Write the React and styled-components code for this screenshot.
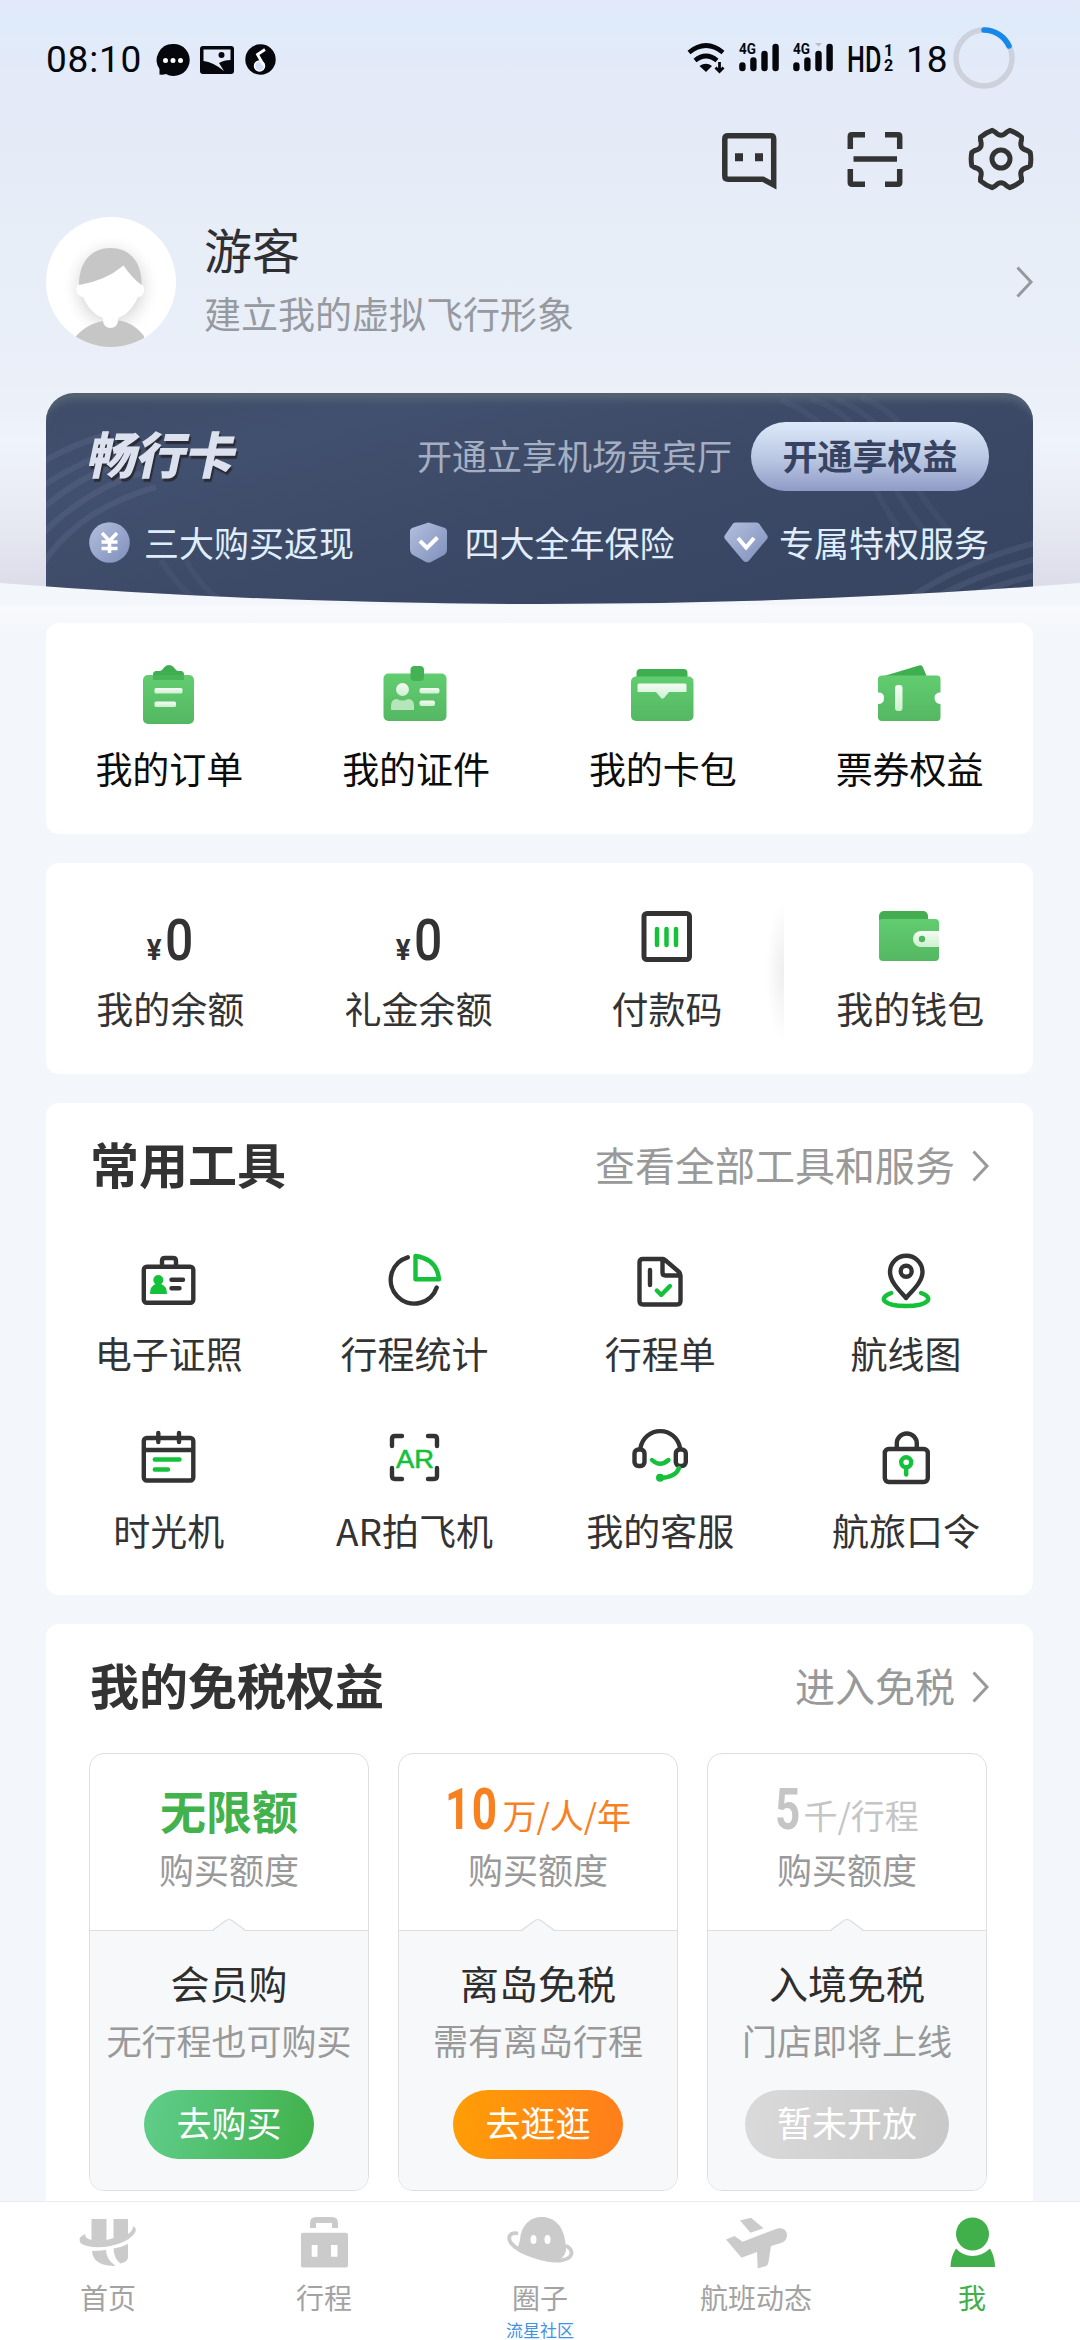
import React from "react";
import styled, { createGlobalStyle } from "styled-components";

const GlobalStyle = createGlobalStyle`
  * {
    box-sizing: border-box;
  }

  body {
    margin: 0;
    background: #f3f6fa;
    font-family: "Noto Sans CJK SC", "Liberation Sans", sans-serif;
    color: #333;
  }

  svg {
    display: block;
    overflow: visible;
    flex-shrink: 0;
  }
`;

const Page = styled.div`
  display: flex;
  flex-direction: column;
  width: 1080px;
  height: 2340px;
  overflow: hidden;
  background: #f3f6fa;
`;

const Hero = styled.header`
  height: 605px;
  flex-shrink: 0;
  background: linear-gradient(
    180deg,
    #e4e9fa 0,
    #dfebfa 22px,
    #e4eaf8 80px,
    #e4ebf7 140px,
    #e7eef8 240px,
    #eaeff8 380px,
    #eff3fb 440px,
    #e9ebf4 510px,
    #dbdce8 590px
  );
  clip-path: path("M0 0H1080V583Q540 625 0 583Z");
`;

/* status bar */

const StatusBar = styled.div`
  display: flex;
  align-items: center;
  height: 116px;
  padding: 0 65px 0 46px;
  font-family: Roboto, "Liberation Sans", sans-serif;
  font-size: 37px;
  line-height: 40px;
  color: #05070c;
`;

const Clock = styled.span`
  width: 111px;
  padding-top: 4px;
  letter-spacing: 0.8px;
`;

const StatusIcons = styled.div`
  display: flex;
  align-items: center;
  gap: 11px;
  margin-top: 3px;
`;

const StatusRight = styled.div`
  display: flex;
  align-items: center;
  margin-left: auto;
`;

const Signal = styled.svg`
  margin-left: 14px;
`;

const Hd = styled.span`
  display: inline-block;
  width: 36px;
  margin-left: 14px;
  padding-top: 3px;
  font-size: 36px;
  font-weight: 500;
  transform: scaleX(0.7);
  transform-origin: left;
`;

const HdLines = styled.span`
  display: flex;
  flex-direction: column;
  width: 23px;
  padding-left: 1px;
  font-size: 16px;
  font-weight: 700;
  line-height: 15px;
`;

const Battery = styled.span`
  width: 47px;
  padding-top: 4px;
`;

/* toolbar + profile */

const Toolbar = styled.div`
  display: flex;
  justify-content: flex-end;
  align-items: center;
  gap: 62px;
  height: 88px;
  padding-right: 47px;
`;

const Profile = styled.div`
  display: flex;
  align-items: center;
  height: 130px;
  margin-top: 13px;
  padding: 0 47px 0 46px;
`;

const ProfileText = styled.div`
  flex: 1;
  padding-left: 28px;
`;

const Name = styled.div`
  font-size: 48px;
  line-height: 62px;
  color: #2e2f33;
`;

const Motto = styled.div`
  font-size: 37px;
  line-height: 68px;
  color: #96999f;
`;

/* membership card */

const VipCard = styled.section`
  position: relative;
  width: 987px;
  height: 220px;
  margin: 46px 0 0 46px;
  padding: 27px 44px 0 43px;
  border-top: 2px solid #55606f;
  border-radius: 28px 28px 0 0;
  overflow: hidden;
  background: linear-gradient(165deg, #3e4c69 0%, #42506f 22%, #3c4a67 50%, #384663 80%, #374560 100%);
  box-shadow: inset 0 10px 8px -6px #596777;
`;

const Waves = styled.svg`
  position: absolute;
  left: 0;
  top: 0;
`;

const VipTop = styled.div`
  position: relative;
  display: flex;
  align-items: center;
  height: 69px;
`;

const VipTitle = styled.h2`
  flex: 1;
  margin: 0;
  padding-bottom: 9px;
  font-size: 50px;
  font-weight: 900;
  line-height: 60px;
  letter-spacing: -1px;
  color: #dbe1ee;
  text-shadow: 2px 3px 1px #2a2b33;
  transform: skewX(-12deg);
`;

const VipHint = styled.span`
  padding-bottom: 4px;
  font-size: 35px;
  color: #a4afc3;
`;

const VipButton = styled.button`
  width: 238px;
  height: 69px;
  margin-left: 19px;
  padding: 0 0 4px;
  border: 0;
  border-radius: 35px;
  background: linear-gradient(180deg, #dde9fa, #b8c6e2 55%, #8f9ac6);
  font: 700 35px/60px "Noto Sans CJK SC", sans-serif;
  color: #374360;
`;

const Perks = styled.div`
  position: relative;
  display: flex;
  justify-content: space-between;
  align-items: center;
  height: 44px;
  margin-top: 29px;
`;

const Perk = styled.div`
  display: flex;
  align-items: center;
  gap: ${props => props.gap}px;
  font-size: 35px;
  line-height: 44px;
  color: #dfedfc;

  &:nth-child(2) {
    margin-left: 7px;
  }
`;

/* white panels */

const Content = styled.main`
  flex: 1;
  min-height: 0;
  display: flex;
  flex-direction: column;
  gap: 29px;
  padding: 18px 47px 0 46px;
  overflow: hidden;
  background: linear-gradient(180deg, #f8fafd, #f3f6fa 30px);
`;

const Panel = styled.section`
  flex-shrink: 0;
  height: ${props => props.height}px;
  border-radius: 13px;
  background: #fff;
`;

const Grid = styled.div`
  display: grid;
  grid-template-columns: ${props => props.columns};
  row-gap: 73px;
  padding-top: ${props => props.top}px;
`;

const Item = styled.div`
  position: relative;
  display: flex;
  flex-direction: column;
  align-items: center;
  height: 104px;
`;

const ItemIcon = styled.div`
  display: flex;
  justify-content: center;
  height: 64px;
`;

const Label = styled.span`
  margin-top: 21px;
  font-size: 37px;
  line-height: 40px;
  white-space: nowrap;
  color: ${props => props.color || "#333"};
`;

const Money = styled.div`
  display: flex;
  align-items: baseline;
  padding-top: 2px;
  font-family: Roboto, "Liberation Sans", sans-serif;
  font-weight: 500;
`;

const Yen = styled.span`
  width: 19px;
  font-size: 30px;
  font-weight: 700;
  transform: scaleX(0.92);
`;

const Amount = styled.span`
  width: 29px;
  font-size: 58px;
  line-height: 70px;
  transform: scaleX(0.86);
  transform-origin: left;
`;

const Divider = styled.i`
  position: absolute;
  left: -25px;
  top: -1px;
  width: 18px;
  height: 140px;
  background: radial-gradient(ellipse 18px 70px at 100% 50%, #eeeeee, rgba(255, 255, 255, 0));
`;

const PanelHead = styled.div`
  display: flex;
  align-items: center;
  justify-content: space-between;
  height: 126px;
  padding: 0 44px;
`;

const PanelTitle = styled.h3`
  margin: 0;
  padding-bottom: 6px;
  font-size: 49px;
  font-weight: 700;
  line-height: 60px;
`;

const More = styled.a`
  display: flex;
  align-items: center;
  gap: 17px;
  padding-bottom: 5px;
  font-size: 40px;
  line-height: 60px;
  color: #999;

  svg {
    margin-top: 5px;
  }
`;

/* duty free offers */

const Offers = styled.div`
  display: flex;
  gap: 29px;
  padding: 3px 0 0 43px;
`;

const Offer = styled.article`
  width: 280px;
  height: 438px;
  border: 1.5px solid #dedede;
  border-radius: 15px;
  overflow: hidden;
  text-align: center;
`;

const Quota = styled.div`
  height: 176px;
  padding-top: 25px;
`;

const QuotaValue = styled.div`
  display: flex;
  justify-content: center;
  align-items: baseline;
  height: 60px;
  font-size: ${props => (props.small ? 34 : 46)}px;
  font-weight: ${props => (props.small ? 400 : 700)};
  line-height: 60px;
  color: ${props => props.color};
`;

const QuotaNumber = styled.b`
  font-family: Roboto, "Liberation Sans", sans-serif;
  font-size: 58px;
  font-weight: 700;
  letter-spacing: 2px;
  margin-right: ${props => props.pull}px;
  transform: scaleX(0.76);
  transform-origin: left;
`;

const Small = styled.div`
  font-size: 35px;
  line-height: 60px;
  white-space: nowrap;
  color: #999;
`;

const OfferBody = styled.div`
  position: relative;
  height: 260px;
  padding-top: 21px;
  border-top: 1.5px solid #dedede;
  background: #f6f8fa;
`;

const Notch = styled.svg`
  position: absolute;
  left: 123px;
  top: -13px;
`;

const OfferName = styled.div`
  margin-bottom: -2px;
  font-size: 39px;
  line-height: 60px;
  color: #2e2e2e;
`;

const OfferButton = styled.button`
  height: 69px;
  margin-top: 20px;
  padding: 0 32px 6px;
  border: 0;
  border-radius: 35px;
  background: ${props => props.fill};
  font: 400 35px/60px "Noto Sans CJK SC", sans-serif;
  color: #fff;
`;

/* tab bar */

const TabBar = styled.nav`
  display: flex;
  height: 139px;
  flex-shrink: 0;
  border-top: 1px solid #ececee;
  background: #fff;
`;

const Tab = styled.div`
  flex: 1;
  display: flex;
  flex-direction: column;
  align-items: center;
  padding-top: 14px;
  font-size: 28px;
  line-height: 34px;
  color: ${props => (props.active ? "#42b04a" : "#a3a3a3")};
`;

const TabLabel = styled.span`
  margin-top: 12px;
`;

const TabNote = styled.span`
  margin-top: 5px;
  font-size: 17px;
  line-height: 22px;
  color: #3f92e6;
`;

const INK = "#333";
const GREEN = "#15c13b";

function GreenDefs() {
  return (
    <defs>
      <linearGradient id="leaf" x1="0" y1="0" x2="0" y2="1">
        <stop offset="0" stopColor="#62cc70" />
        <stop offset="1" stopColor="#54b862" />
      </linearGradient>
      <linearGradient id="steel" x1="0" y1="0" x2="1" y2="1">
        <stop offset="0" stopColor="#b3bfde" />
        <stop offset="1" stopColor="#7f8fbb" />
      </linearGradient>
      <linearGradient id="frost" x1="0" y1="0" x2="0" y2="1">
        <stop offset="0" stopColor="#f4fcf4" />
        <stop offset="1" stopColor="#cdf0d0" />
      </linearGradient>
    </defs>
  );
}

const Icon = ({ children, width = 64, height = 64 }) => (
  <svg width={width} height={height} viewBox={`0 0 ${width} ${height}`} fill="none">
    {children}
  </svg>
);

const LineIcon = ({ children }) => (
  <svg
    width="64"
    height="64"
    fill="none"
    stroke={INK}
    strokeWidth="4.4"
    strokeLinecap="round"
    strokeLinejoin="round"
  >
    {children}
  </svg>
);

const Chevron = ({ color = "#999" }) => (
  <svg width="17" height="32" fill="none" stroke={color} strokeWidth="3">
    <path d="M1.5 1.5 15 16 1.5 30.5" />
  </svg>
);

function SignalBars({ children }) {
  return (
    <Signal width="40" height="32" fill="none" stroke="#05070c" strokeWidth="6.4" strokeLinecap="round">
      <path d="M3.4 23.5V26M14.4 18.5V26M25.5 12V26M36.6 5V26" />
      <text
        x="0"
        y="12"
        fontSize="15"
        fontWeight="700"
        fontFamily="Roboto, sans-serif"
        fill="#05070c"
        stroke="none"
        textLength="17"
        lengthAdjust="spacingAndGlyphs"
      >
        4G
      </text>
      {children}
    </Signal>
  );
}

// six teeth, the outline dips between each pair
function gearPath() {
  const at = (r, deg) => {
    const a = (deg * Math.PI) / 180;
    return `${(32 + r * Math.cos(a)).toFixed(1)} ${(32 + r * Math.sin(a)).toFixed(1)}`;
  };
  let d = `M${at(30, -13)}`;
  for (let k = 0; k < 360; k += 60) {
    d += `Q${at(30.5, k)} ${at(30, k + 13)}L${at(27.5, k + 18)}Q${at(20.5, k + 30)} ${at(27.5, k + 42)}L${at(30, k + 47)}`;
  }
  return d + "Z";
}

const topActions = [
  <>
    <path d="M54 7.8H11q-3.200 0-3.200 3.200V48q0 3.200 3.200 3.200H46L56.700 57V11q0-3.200-2.700-3.200Z" stroke={INK} strokeWidth="5.500" />
    <path d="M18 25.300h8v8h-8ZM38 25.300h8v8h-8Z" fill={INK} />
  </>,
  <path
    d="M22 6.800H9q-1.700 0-1.700 1.700V21M42 6.800H55q1.700 0 1.700 1.700V21M22 56.200H9q-1.700 0-1.700-1.700V41M42 56.200H55q1.700 0 1.700-1.700V41M10.500 31H54"
    stroke={INK}
    strokeWidth="5.500"
  />,
  <g stroke={INK} strokeWidth="5" strokeLinejoin="round" transform="translate(0 -1)">
    <path d={gearPath()} />
    <circle cx="32" cy="32" r="9" />
  </g>
];

const perks = [
  {
    text: "三大购买返现",
    gap: 14,
    width: 41,
    icon: (
      <>
        <circle cx="20.500" cy="20.500" r="20.300" fill="url(#steel)" />
        <path d="M13 11 20.500 19 28 11M20.500 19V31M12.500 20H28.500M12.500 26.500H28.500" stroke="#fff" strokeWidth="3.600" />
      </>
    )
  },
  {
    text: "四大全年保险",
    gap: 17,
    width: 37,
    icon: (
      <>
        <path d="M18.500.5 35 6q2 .8 2 3V27q0 4-3 6L21 40q-2.500 1-5 0L3 33q-3-2-3-6V9Q0 7 2 6Z" fill="url(#steel)" />
        <path d="M10 19 17 26 27.500 15.500" stroke="#fff" strokeWidth="4" />
      </>
    )
  },
  {
    text: "专属特权服务",
    gap: 11,
    width: 44,
    icon: (
      <>
        <path d="M12 .5H32q2 0 3 1L43 13q1.500 2 0 4L25 38.500q-3 3-6 0L1 17q-1.500-2 0-4L9 1.500Q10 .5 12 .5Z" fill="url(#steel)" />
        <path d="M14 16 22 25.500 30 16" stroke="#fff" strokeWidth="4" />
      </>
    )
  }
];

const assets = [
  {
    text: "我的订单",
    icon: (
      <>
        <path d="M16 18V12q0-4 4-4h3q2 0 3-2 2-3 4-3.500 2-.5 4 0 2 .5 4 3.500 1 2 3 2h2q4 0 4 4v6Z" fill="#3fae50" />
        <rect x="6" y="12" width="51" height="49" rx="5" fill="url(#leaf)" />
        <path d="M16 12Q16 8 20 8h3q2 0 3-2 2-3 4-3.500 2-.5 4 0 2 .5 4 3.500 1 2 3 2h2q4 0 4 4v5H16Z" fill="#3fae50" fillOpacity=".75" />
        <rect x="17.500" y="25" width="28" height="5.500" rx="1.500" fill="url(#frost)" />
        <rect x="17.500" y="38.500" width="21.500" height="5.500" rx="1.500" fill="url(#frost)" />
      </>
    )
  },
  {
    text: "我的证件",
    icon: (
      <>
        <rect x="-.5" y="10.500" width="63" height="47.500" rx="5" fill="url(#leaf)" />
        <rect x="26.500" y="3" width="13.500" height="15" rx="4" fill="#43b154" />
        <circle cx="18.500" cy="26.500" r="6.500" fill="url(#frost)" />
        <path d="M7 47V43q0-7 6-7 5.500 3 11 0 6 0 6 7V47Z" fill="#b5e6b9" />
        <rect x="35.500" y="25" width="20" height="5.500" rx="2" fill="url(#frost)" />
        <rect x="35.500" y="37.500" width="15.500" height="5.500" rx="2" fill="url(#frost)" />
      </>
    )
  },
  {
    text: "我的卡包",
    icon: (
      <>
        <rect x="5.500" y="6" width="51" height="20" rx="4" fill="#3fae50" />
        <rect x="0" y="13.500" width="62.500" height="44.500" rx="5" fill="url(#leaf)" />
        <path d="M8 20.500H54q1.500 0 1.500 1.500V29H38L33 35q-1.500 1.500-3 0L25 29H6.500V22q0-1.500 1.500-1.500Z" fill="url(#frost)" />
      </>
    )
  },
  {
    text: "票券权益",
    icon: (
      <>
        <path d="M6 13 41 2.500q3-1 4 2L49 14V18Z" fill="#3fae50" />
        <path d="M4 12.500H59q3.500 0 3.500 3.500V29.500q-6 0-6 5.500t6 6V54q0 4-3.500 4H4Q0 58 0 54V41q6 0 6-6T0 29.500V16q0-3.500 4-3.500Z" fill="url(#leaf)" />
        <rect x="17" y="22" width="7.500" height="26" rx="3" fill="url(#frost)" />
      </>
    )
  }
];

const tools = [
  {
    text: "电子证照",
    icon: (
      <>
        <rect x="6.800" y="18.800" width="49.500" height="36" rx="3" />
        <path d="M25 18V13q0-3 3-3h8q3 0 3 3v5M34.500 31.700H46M34.500 40.300H42.500" />
        <circle cx="21.300" cy="32" r="5" fill={GREEN} stroke="none" />
        <path d="M13 46q0-8 5.500-10H24q6 2 6 10Z" fill={GREEN} stroke="none" />
      </>
    )
  },
  {
    text: "行程统计",
    icon: (
      <>
        <path d="M24.800 9.300A23.600 23.600 0 1 0 53.700 39.500" />
        <path d="M32.500 8V31.200H56Q54 11 32.500 8Z" stroke={GREEN} />
      </>
    )
  },
  {
    text: "行程单",
    icon: (
      <>
        <path d="M35 11H15q-3.500 0-3.500 3.500V53q0 3.500 3.500 3.500H49q3.500 0 3.500-3.500V27.500q0-2.500-2-4L37 12q-1-1-2-1ZM34.500 12V24.500q0 3 3 3H52M22 22V37" />
        <path d="M28.800 42.500 33.200 47 42 38" stroke={GREEN} />
      </>
    )
  },
  {
    text: "航线图",
    icon: (
      <>
        <path d="M32 50C26 43 16 34 16 24a16 16 0 0 1 32.500 0C48.500 34 38 43 32 50Z" />
        <circle cx="32.200" cy="23.300" r="5.500" />
        <path d="M17.300 45C3 50 10 58 32 58S61 50 47 45" stroke={GREEN} />
      </>
    )
  },
  {
    text: "时光机",
    icon: (
      <>
        <rect x="6.800" y="13" width="49.500" height="42.500" rx="3" />
        <path d="M7 25H56M21.300 8V17M42 8V17" />
        <path d="M17.800 34.500H42.500M17.800 44.500H31" stroke={GREEN} />
      </>
    )
  },
  {
    text: "AR拍飞机",
    icon: (
      <>
        <path d="M19 11H12q-3 0-3 3v7M45 11h6q3 0 3 3v7M19 54H12q-3 0-3-3V43M45 54h6q3 0 3-3V43" />
        <text
          x="13"
          y="42.500"
          fill={GREEN}
          stroke={GREEN}
          strokeWidth=".6"
          fontSize="25"
          fontWeight="400"
          fontFamily="Liberation Sans, sans-serif"
          textLength="38"
          lengthAdjust="spacingAndGlyphs"
        >
          AR
        </text>
      </>
    )
  },
  {
    text: "我的客服",
    icon: (
      <>
        <path d="M12.500 23A20 20 0 0 1 52 23" />
        <rect x="6.500" y="24.500" width="10" height="16.500" rx="4" />
        <rect x="47.800" y="24.500" width="10" height="16.500" rx="4" />
        <path d="M24 35Q32 42.500 40.500 35M51 43Q48 52 33 53" stroke={GREEN} />
        <circle cx="32" cy="52.700" r="4" fill={GREEN} stroke="none" />
      </>
    )
  },
  {
    text: "航旅口令",
    icon: (
      <>
        <rect x="10.800" y="24" width="43" height="33" rx="4" />
        <path d="M22.800 23V18.500a10 10 0 0 1 20 0V23" />
        <g stroke={GREEN}>
          <circle cx="32.200" cy="37.300" r="5" />
          <path d="M32.200 43V49.500" />
        </g>
      </>
    )
  }
];

const offers = [
  {
    value: "无限额",
    color: "#42b24c",
    name: "会员购",
    note: "无行程也可购买",
    action: "去购买",
    fill: "linear-gradient(100deg, #60cd8b, #40b14a)"
  },
  {
    number: "10",
    pull: -13,
    value: "万/人/年",
    color: "#f8801f",
    name: "离岛免税",
    note: "需有离岛行程",
    action: "去逛逛",
    fill: "linear-gradient(100deg, #ff9e05, #ff7d1c)"
  },
  {
    number: "5",
    pull: -7,
    value: "千/行程",
    color: "#c5c5c5",
    name: "入境免税",
    note: "门店即将上线",
    action: "暂未开放",
    fill: "linear-gradient(100deg, #dadada, #c8c8c8)"
  }
];

const tabs = [
  {
    text: "首页",
    icon: (
      <>
        <path d="M15.500 3H30.500V24L37.500 22V3H52V18Q56 16 57.500 10 62 13 58 18 50 28 28 31 10 32 4.500 27 1 21 9.500 18 8 22 15.500 24Z" />
        <path d="M16 35Q23 35 30 34 30 43 39.500 50 17 50 16 35ZM37.500 32.500Q46 31 52 28V42Q51 46 44.500 47.500 38 43 37.500 32.500Z" />
      </>
    )
  },
  {
    text: "行程",
    icon: (
      <path
        fillRule="evenodd"
        d="M18 12V7q0-6 6-6H40q6 0 6 6v5H40V7H24v5ZM11 16.700H54q2 0 2 2V49.500q0 2-2 2H11q-2 0-2-2V18.700q0-2 2-2ZM19.700 29V40.700H25.500V29ZM39 29V40.700H45.500V29Z"
      />
    )
  },
  {
    text: "圈子",
    note: "流星社区",
    icon: (
      <>
        <path d="M12 24C13 9 22 1 34 1S56 10 57.500 27C60 35 56 42 50 44 34 46 14 37 10 31Z" />
        <path d="M10 17.500C2 16-1 21 3 27 11 37 38 46 52 44.500 65 43 67 35 58 29.500" fill="none" stroke="#cbcbcb" strokeWidth="3.800" />
        <ellipse cx="25.500" cy="23.500" rx="3" ry="4.500" fill="#fff" />
        <ellipse cx="39.500" cy="23.500" rx="3" ry="4.500" fill="#fff" />
      </>
    )
  },
  {
    text: "航班动态",
    icon: (
      <path d="M16 4.500 27 1.700 39.500 12.300 26.500 16.800ZM2 23.500 10.500 20 18.500 25.700 52 13C58 11 63 14 63 19 63 24 60 26 57 27L47 30 44.500 46Q44 49 42 50L33.700 52.500 33 36 17.500 41.700Z" />
    )
  },
  {
    text: "我",
    active: true,
    icon: (
      <>
        <circle cx="32.500" cy="18" r="16.500" />
        <path d="M10.500 51Q10.500 41 16 32.500 23 40 32.500 40T50 32.500Q55 41 55 51Z" />
      </>
    )
  }
];

function Avatar() {
  return (
    <Icon width={130} height={130}>
      <defs>
        <clipPath id="face">
          <circle cx="65" cy="65" r="65" />
        </clipPath>
        <radialGradient id="halo">
          <stop offset=".45" stopColor="#cfcfcf" />
          <stop offset="1" stopColor="#fff" stopOpacity="0" />
        </radialGradient>
      </defs>
      <circle cx="65" cy="65" r="65" fill="#fff" />
      <g clipPath="url(#face)">
        <ellipse cx="65" cy="70" rx="50" ry="54" fill="url(#halo)" />
        <path d="M30 119Q44 104 64.500 103T98 119V132H30Z" fill="#c6c6c6" />
        <path d="M57 94H72V104Q71 111 64.500 111T57 104Z" fill="#fff" />
        <path d="M33 67Q29 69 31 76 34 80 37 80 47 102 64.500 102T92 80Q96 80 98 75 99 69 95 67L77 46 55 58Z" fill="#fff" />
        <path d="M33 68C33 44 46 31 64.500 31S96 44 95.500 68Q86 61 77.500 48.500 59 64 33 68Z" fill="#c6c6c6" />
      </g>
    </Icon>
  );
}

export default function App() {
  return (
    <Page>
      <GlobalStyle />
      <Hero>
        <StatusBar>
          <Clock>08:10</Clock>
          <StatusIcons>
            <Icon width={32} height={32}>
              <path d="M16 0a16 16 0 1 1-7 30Q6 31 2.500 30.500V25A16 16 0 0 1 16 0Z" fill="#05070c" />
              <path d="M8.500 16.500h.01M16 16.500h.01M23.500 16.500h.01" stroke="#fff" strokeWidth="5" strokeLinecap="round" />
            </Icon>
            <Icon width={34} height={28}>
              <rect width="34" height="28" rx="3" fill="#05070c" />
              <path d="M3.500 3.500H30.500V14Q24 14 19 17L24 25Q13 16 3.500 15Z" fill="#e4ebf8" />
              <circle cx="21.500" cy="9" r="3" fill="#05070c" />
            </Icon>
            <Icon width={31} height={31}>
              <circle cx="15.500" cy="15.500" r="15.200" fill="#05070c" />
              <circle cx="14.500" cy="22" r="5" stroke="#fff" strokeWidth="1.500" fill="#cfe0f8" />
              <path d="M18.500 21 12.500 10.500 20 5.500" stroke="#fff" strokeWidth="2.800" />
            </Icon>
          </StatusIcons>
          <StatusRight>
            <Icon width={38} height={30}>
              <path d="M2 9.500Q19-4.500 36 9.500M8 17.500Q19 8.500 30 17.500" stroke="#05070c" strokeWidth="4.600" />
              <path d="M12.500 23Q19 18.500 25 23L19 29Z" fill="#05070c" />
              <path d="M32.500 19V28M28.500 24.500 32.500 28.500 36.500 24.500" stroke="#05070c" strokeWidth="2.800" />
            </Icon>
            <SignalBars />
            <SignalBars>
              <path d="M22 1h7l-3.500 3.500Z" fill="#b9bcc4" stroke="none" />
            </SignalBars>
            <Hd>HD</Hd>
            <HdLines>
              <span>1</span>
              <span>2</span>
            </HdLines>
            <Battery>18</Battery>
            <Icon width={62} height={62}>
              <circle cx="31" cy="31" r="28" stroke="#ccd1dc" strokeWidth="5.500" />
              <path d="M31 3A28 28 0 0 1 56 19" stroke="#1588ea" strokeWidth="5.500" strokeLinecap="round" />
            </Icon>
          </StatusRight>
        </StatusBar>
        <Toolbar>
          {topActions.map((icon, i) => (
            <Icon key={i}>{icon}</Icon>
          ))}
        </Toolbar>
        <Profile>
          <Avatar />
          <ProfileText>
            <Name>游客</Name>
            <Motto>建立我的虚拟飞行形象</Motto>
          </ProfileText>
          <Chevron color="#95989d" />
        </Profile>
        <VipCard>
          <Waves width="987" height="220" fill="none" stroke="#8f9dbd" strokeWidth="6">
            <path
              d="M-5 68Q25 50 60 40M-5 92Q35 65 85 50M-5 115Q40 75 90 65M-5 140Q40 95 95 78M-5 172Q30 115 110 92"
              strokeOpacity=".13"
            />
            <path
              d="M115 165Q130 190 150 205M140 165Q155 195 180 208M735 5Q760 15 775 30M765 4Q790 12 805 28M790 4Q815 14 830 30M815 2Q840 12 855 30M830 95Q840 115 852 132M850 95Q865 120 878 135M872 95Q885 115 905 138"
              strokeOpacity=".08"
            />
            <path d="M860 205Q920 165 990 148M885 205Q930 180 990 164M910 205Q950 190 990 180" strokeOpacity=".15" />
          </Waves>
          <VipTop>
            <VipTitle>畅行卡</VipTitle>
            <VipHint>开通立享机场贵宾厅</VipHint>
            <VipButton>开通享权益</VipButton>
          </VipTop>
          <Perks>
            {perks.map(perk => (
              <Perk key={perk.text} gap={perk.gap}>
                <Icon width={perk.width} height={41}>
                  <GreenDefs />
                  {perk.icon}
                </Icon>
                {perk.text}
              </Perk>
            ))}
          </Perks>
        </VipCard>
      </Hero>

      <Content>
        <Panel height={211}>
          <Grid columns="repeat(4, 1fr)" top={40}>
            {assets.map(item => (
              <Item key={item.text}>
                <ItemIcon>
                  <Icon>{item.icon}</Icon>
                </ItemIcon>
                <Label color="#0c0c0c">{item.text}</Label>
              </Item>
            ))}
          </Grid>
        </Panel>

        <Panel height={211}>
          <Grid columns="repeat(3, 248.400px) 238px" top={40}>
            {["我的余额", "礼金余额"].map(text => (
              <Item key={text}>
                <ItemIcon>
                  <Money>
                    <Yen>¥</Yen>
                    <Amount>0</Amount>
                  </Money>
                </ItemIcon>
                <Label>{text}</Label>
              </Item>
            ))}
            <Item>
              <ItemIcon>
                <Icon>
                  <rect x="9" y="10.500" width="45.500" height="46" rx="3" stroke={INK} strokeWidth="5" />
                  <path d="M22 26V42M31.500 26V42M41 26V42" stroke={GREEN} strokeWidth="4.500" strokeLinecap="round" />
                </Icon>
              </ItemIcon>
              <Label>付款码</Label>
            </Item>
            <Item>
              <Divider />
              <ItemIcon>
                <Icon>
                  <rect x="1" y="8" width="49" height="30" rx="5" fill="#44ad52" />
                  <path d="M1 18q0-2 3-2H57q4 0 4 4V54q0 4-4 4H5q-4 0-4-4Z" fill="url(#leaf)" />
                  <path d="M61 28H43a8 8 0 0 0 0 16H61Z" fill="url(#frost)" />
                  <circle cx="44" cy="36" r="3.200" fill="#4fb65d" />
                </Icon>
              </ItemIcon>
              <Label>我的钱包</Label>
            </Item>
          </Grid>
        </Panel>

        <Panel height={492}>
          <PanelHead>
            <PanelTitle>常用工具</PanelTitle>
            <More>
              查看全部工具和服务
              <Chevron />
            </More>
          </PanelHead>
          <Grid columns="repeat(4, 245.700px)" top={19}>
            {tools.map(item => (
              <Item key={item.text}>
                <ItemIcon>
                  <LineIcon>{item.icon}</LineIcon>
                </ItemIcon>
                <Label>{item.text}</Label>
              </Item>
            ))}
          </Grid>
        </Panel>

        <Panel height={600}>
          <PanelHead>
            <PanelTitle>我的免税权益</PanelTitle>
            <More>
              进入免税
              <Chevron />
            </More>
          </PanelHead>
          <Offers>
            {offers.map(offer => (
              <Offer key={offer.name}>
                <Quota>
                  <QuotaValue small={offer.number ? 1 : 0} color={offer.color}>
                    {offer.number && <QuotaNumber pull={offer.pull}>{offer.number}</QuotaNumber>}
                    {offer.value}
                  </QuotaValue>
                  <Small>购买额度</Small>
                </Quota>
                <OfferBody>
                  <Notch width="32" height="13" fill="#f6f8fa" stroke="#dedede" strokeWidth="1.200">
                    <path d="M1 13.500V12L13 2.500Q16 .5 19 2.500L31 12V13.500" stroke="none" />
                    <path d="M0 12 13 2.500Q16 .5 19 2.500L32 12" />
                  </Notch>
                  <OfferName>{offer.name}</OfferName>
                  <Small>{offer.note}</Small>
                  <OfferButton fill={offer.fill}>{offer.action}</OfferButton>
                </OfferBody>
              </Offer>
            ))}
          </Offers>
        </Panel>
      </Content>

      <TabBar>
        {tabs.map(tab => (
          <Tab key={tab.text} active={tab.active ? 1 : 0}>
            <svg width="64" height="52" fill={tab.active ? "#42b04a" : "#cbcbcb"}>
              {tab.icon}
            </svg>
            <TabLabel>{tab.text}</TabLabel>
            {tab.note && <TabNote>{tab.note}</TabNote>}
          </Tab>
        ))}
      </TabBar>
    </Page>
  );
}
